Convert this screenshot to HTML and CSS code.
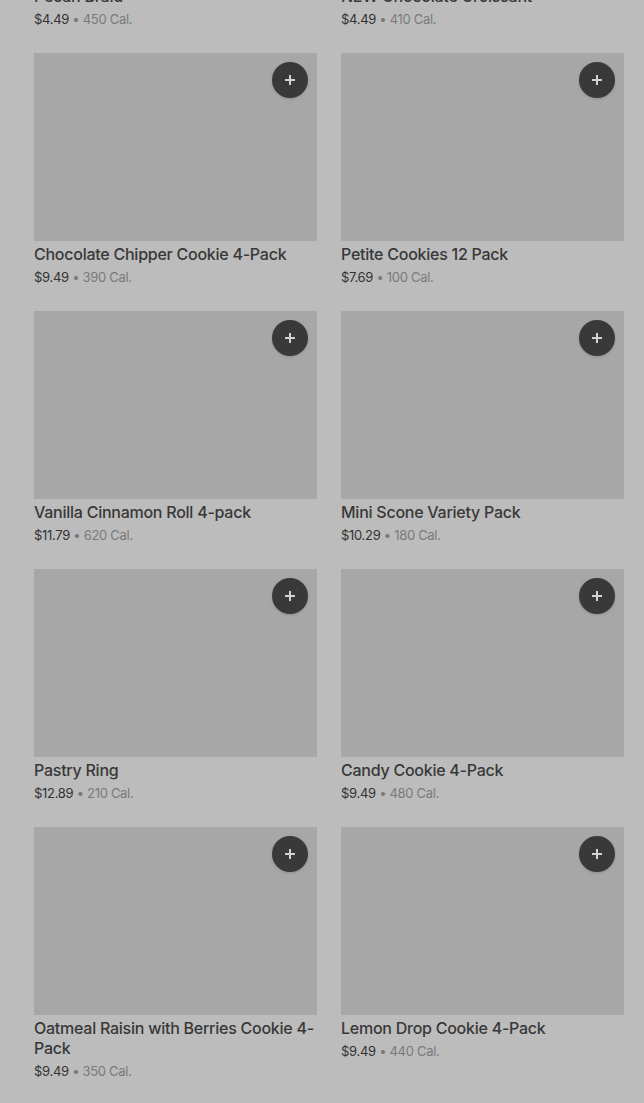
FILE: index.html
```html
<!DOCTYPE html>
<html lang="en">
<head>
  <meta charset="UTF-8">
  <meta name="viewport" content="width=device-width, initial-scale=1.0">
  <title>Bakery - Menu</title>
  <link rel="stylesheet" href="styles.css">
</head>
<body>
  <div class="menu">
    <div class="menu-grid">
      <div class="item">
        <div class="item-img"><button class="add-btn"><svg viewBox="0 0 12 12"><path d="M6 1v10M1 6h10"/></svg></button></div>
        <div class="item-name">Pecan Braid</div>
        <div class="item-meta"><span class="price">$4.49</span> • 450 Cal.</div>
      </div>
      <div class="item">
        <div class="item-img"><button class="add-btn"><svg viewBox="0 0 12 12"><path d="M6 1v10M1 6h10"/></svg></button></div>
        <div class="item-name">NEW Chocolate Croissant</div>
        <div class="item-meta"><span class="price">$4.49</span> • 410 Cal.</div>
      </div>
      <div class="item">
        <div class="item-img"><button class="add-btn"><svg viewBox="0 0 12 12"><path d="M6 1v10M1 6h10"/></svg></button></div>
        <div class="item-name">Chocolate Chipper Cookie 4-Pack</div>
        <div class="item-meta"><span class="price">$9.49</span> • 390 Cal.</div>
      </div>
      <div class="item">
        <div class="item-img"><button class="add-btn"><svg viewBox="0 0 12 12"><path d="M6 1v10M1 6h10"/></svg></button></div>
        <div class="item-name">Petite Cookies 12 Pack</div>
        <div class="item-meta"><span class="price">$7.69</span> • 100 Cal.</div>
      </div>
      <div class="item">
        <div class="item-img"><button class="add-btn"><svg viewBox="0 0 12 12"><path d="M6 1v10M1 6h10"/></svg></button></div>
        <div class="item-name">Vanilla Cinnamon Roll 4-pack</div>
        <div class="item-meta"><span class="price">$11.79</span> • 620 Cal.</div>
      </div>
      <div class="item">
        <div class="item-img"><button class="add-btn"><svg viewBox="0 0 12 12"><path d="M6 1v10M1 6h10"/></svg></button></div>
        <div class="item-name">Mini Scone Variety Pack</div>
        <div class="item-meta"><span class="price">$10.29</span> • 180 Cal.</div>
      </div>
      <div class="item">
        <div class="item-img"><button class="add-btn"><svg viewBox="0 0 12 12"><path d="M6 1v10M1 6h10"/></svg></button></div>
        <div class="item-name">Pastry Ring</div>
        <div class="item-meta"><span class="price">$12.89</span> • 210 Cal.</div>
      </div>
      <div class="item">
        <div class="item-img"><button class="add-btn"><svg viewBox="0 0 12 12"><path d="M6 1v10M1 6h10"/></svg></button></div>
        <div class="item-name">Candy Cookie 4-Pack</div>
        <div class="item-meta"><span class="price">$9.49</span> • 480 Cal.</div>
      </div>
      <div class="item">
        <div class="item-img"><button class="add-btn"><svg viewBox="0 0 12 12"><path d="M6 1v10M1 6h10"/></svg></button></div>
        <div class="item-name">Oatmeal Raisin with Berries Cookie 4-Pack</div>
        <div class="item-meta"><span class="price">$9.49</span> • 350 Cal.</div>
      </div>
      <div class="item">
        <div class="item-img"><button class="add-btn"><svg viewBox="0 0 12 12"><path d="M6 1v10M1 6h10"/></svg></button></div>
        <div class="item-name">Lemon Drop Cookie 4-Pack</div>
        <div class="item-meta"><span class="price">$9.49</span> • 440 Cal.</div>
      </div>
    </div>
  </div>
</body>
</html>
```

FILE: styles.css
```css
* {
  margin: 0;
  padding: 0;
  box-sizing: border-box;
  font-family: Inter, 'Noto Sans', sans-serif;
}

body {
  background-color: #bcbcbc;
  color: #363636;
  overflow: hidden;
}

.menu {
  padding: 0 20px 0 34px;
}

/* page is scrolled: first row sits partly above the viewport */
.menu-grid {
  margin-top: -205px;
  display: grid;
  grid-template-columns: 1fr 1fr;
  column-gap: 24px;
  row-gap: 25px;
}

.item-img {
  position: relative;
  height: 188px;
  background-color: #a7a7a7;
  margin-bottom: 3px;
}

.add-btn {
  position: absolute;
  top: 9px;
  right: 9px;
  width: 36px;
  height: 36px;
  border: none;
  border-radius: 50%;
  background-color: #393939;
  display: flex;
  align-items: center;
  justify-content: center;
  box-shadow: 0 1px 3px rgba(0,0,0,0.15);
}

.add-btn svg {
  width: 12px;
  height: 12px;
  fill: none;
  stroke: #d2d2d2;
  stroke-width: 2;
}

.item-name {
  font-size: 16px;
  font-weight: 500;
  line-height: 20px;
  letter-spacing: -0.25px;
  color: #383838;
}

.item-meta {
  margin-top: 4px;
  font-size: 13px;
  line-height: 18px;
  letter-spacing: -0.3px;
  color: #7a7a7a;
}

.price {
  color: #333;
}
```
